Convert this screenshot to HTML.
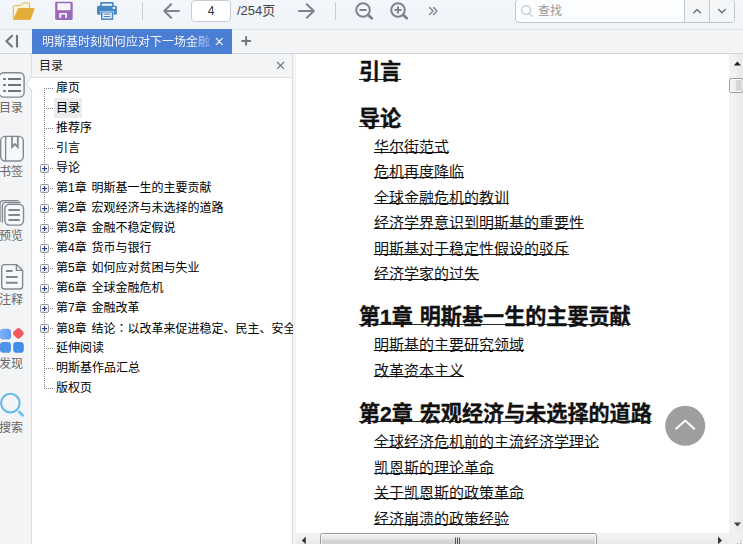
<!DOCTYPE html>
<html lang="zh-CN">
<head>
<meta charset="utf-8">
<title>明斯基时刻如何应对下一场金融危机</title>
<style>
*{box-sizing:border-box;margin:0;padding:0}
html,body{width:743px;height:544px;overflow:hidden;background:#f3f4f6}
body{position:relative;font-family:"Liberation Sans","Noto Sans CJK SC",sans-serif;color:#000}
.abs{position:absolute}
#toolbar{left:0;top:0;width:743px;height:30px;background:linear-gradient(#f3f7fb,#eff4f9);border-bottom:1px solid #e0e4e9}
#tabrow{left:0;top:30px;width:743px;height:24px;background:#f3f4f6;border-bottom:1px solid #cfd2d6}
#tab{left:32px;top:29px;width:200px;height:25px;background:#4a7dd4;color:#fff;font-size:12px;line-height:27px;padding-left:10px;white-space:nowrap;overflow:hidden}
#iconbar{left:0;top:54px;width:31px;height:490px;background:#f3f4f6}
#toc{left:31px;top:54px;width:262px;height:490px;background:#fff;border-left:1px solid #dcdfe3;border-right:1px solid #dcdfe3}
#tochead{left:0;top:0;width:260px;height:24px;background:#f3f4f6;border-bottom:1px solid #dcdfe3;font-size:12px;line-height:24px;padding-left:7px;color:#222}
#divider{left:293px;top:54px;width:3px;height:490px;background:#f3f4f6}
#main{left:296px;top:54px;width:433px;height:479px;background:#fff;overflow:hidden}
#vscroll{left:729px;top:54px;width:14px;height:479px;background:linear-gradient(90deg,#f2f2f2 0,#f1f1f1 50%,#ececec 58%,#ebebeb 100%)}
#hscroll{left:296px;top:533px;width:447px;height:11px;background:linear-gradient(#f2f2f2 0,#f1f1f1 5px,#ececec 7px,#ebebeb 100%)}
.ti{word-spacing:1.5px;position:absolute;left:22px;font-size:12px;line-height:20px;height:20px;white-space:nowrap;color:#000;padding:0 2px}
.h{text-decoration-color:#2a2a2a !important;position:absolute;left:63px;font-size:21.1px;word-spacing:1px;-webkit-text-stroke:0.35px #111;font-weight:bold;white-space:nowrap;line-height:28px;text-decoration:underline;text-decoration-thickness:1px;text-underline-offset:0px;color:#111}
.s{position:absolute;left:78px;font-size:15px;white-space:nowrap;line-height:22px;text-decoration:underline;text-decoration-thickness:1px;text-underline-offset:0px;color:#111}
.lbl{position:absolute;left:-1px;width:32px;font-size:12px;color:#666;line-height:14px;white-space:nowrap}

#pagebox{left:191px;top:0;width:40px;height:22px;border:1px solid #c9cdd3;border-radius:4px;background:#fff;font-size:12px;line-height:20px;text-align:center;color:#333}
#pagecnt{left:237px;top:1px;font-size:13px;line-height:20px;color:#444;white-space:nowrap}
#search{left:515px;top:-1px;width:220px;height:24px;border:1px solid #c3c7cd;border-radius:4px;background:#fcfdfe;overflow:hidden}
#sph{left:22px;top:0;font-size:12px;line-height:22px;color:#9a9a9a}
#sb1{left:168px;top:0;width:25px;height:24px;border-left:1px solid #c3c7cd;background:#f4f5f7}
#sb2{left:193px;top:0;width:27px;height:24px;border-left:1px solid #c3c7cd;background:#f4f5f7}

.sel{background:#ececec}
#tabtxt{display:inline-block;width:169px;overflow:hidden;white-space:nowrap;color:#f2f5fb;-webkit-mask-image:linear-gradient(90deg,#000 0,#000 150px,rgba(0,0,0,.25) 169px);mask-image:linear-gradient(90deg,#000 0,#000 150px,rgba(0,0,0,.25) 169px)}
</style>
</head>
<body>
<div id="toolbar" class="abs"></div>
<svg class="abs" style="left:0;top:0" width="743" height="29" viewBox="0 0 743 29">
<!-- folder -->
<path d="M13.3 19.5 V6.6 Q13.3 5.6 14.3 5.6 H20.6 L22.8 2.9 H28.6 Q29.6 2.9 29.6 3.9 V8" fill="#fbf3dc" stroke="#e6b446" stroke-width="1"/>
<path d="M18.4 8.6 H34.2 L30.2 19.3 H13.9 Z" fill="#e3ad38" stroke="#e3ad38" stroke-width="1" stroke-linejoin="round"/>
<!-- save -->
<path d="M55.2 3.2 Q55.2 1.8 56.6 1.8 H71.3 Q72.7 1.8 72.7 3.2 V18.5 Q72.7 19.9 71.3 19.9 H56.6 Q55.2 19.9 55.2 18.5 Z" fill="#9b67bb"/>
<rect x="57.4" y="3.2" width="13.1" height="7" fill="#f6f1fa"/>
<rect x="59.2" y="13" width="7.8" height="5" fill="#f6f1fa"/>
<rect x="61.2" y="14.6" width="4" height="3.4" fill="#9b67bb"/>
<!-- printer -->
<path d="M100.2 7 V3.3 Q100.2 2.1 101.4 2.1 H112.5 Q113.7 2.1 113.7 3.3 V7 Z" fill="#4787c4"/>
<rect x="101.8" y="3.7" width="10.3" height="3" fill="#f4f8fc"/>
<path d="M97 7.3 Q97 5.8 98.5 5.8 H115.4 Q116.9 5.8 116.9 7.3 V13.4 Q116.9 14.8 115.4 14.8 H98.5 Q97 14.8 97 13.4 Z" fill="#4787c4"/>
<rect x="112.8" y="7" width="2.2" height="2" fill="#f4f8fc"/>
<rect x="100.1" y="11" width="14" height="4" fill="#a9c8e6"/>
<rect x="101" y="11.8" width="12.2" height="8.1" fill="#4787c4"/>
<rect x="102.5" y="12.6" width="9.2" height="5.8" fill="#f4f8fc"/>
<rect x="103.7" y="13.6" width="6.6" height="1.1" fill="#4787c4"/>
<rect x="103.7" y="16" width="6.6" height="1.1" fill="#4787c4"/>
<!-- separators -->
<rect x="142" y="2" width="1" height="18" fill="#c9cdd3"/>
<rect x="335" y="2" width="1" height="18" fill="#c9cdd3"/>
<!-- arrows -->
<g fill="none" stroke="#7d848d" stroke-width="2" stroke-linecap="round" stroke-linejoin="round">
<path d="M179 11 H164.2 M171.2 4.2 L164.2 11 L171.2 17.8"/>
<path d="M299 11 H313.8 M306.8 4.2 L313.8 11 L306.8 17.8"/>
<circle cx="363" cy="10" r="6.8"/>
<path d="M360.2 10 H365.8"/><path d="M368.6 15.4 L371.8 18.2" stroke-width="2.8"/>
<circle cx="398" cy="10" r="6.8"/>
<path d="M395.2 10 H400.8 M398 7.2 V12.8"/><path d="M403.6 15.4 L406.8 18.2" stroke-width="2.8"/>
</g>
<g fill="none" stroke="#7d848d" stroke-width="1.4" stroke-linecap="round" stroke-linejoin="round">
<path d="M429.6 7.6 L433 11 L429.6 14.4 M433.6 7.6 L437 11 L433.6 14.4"/>
</g>
</svg>
<div class="abs" id="pagebox">4</div>
<div class="abs" id="pagecnt">/254页</div>
<div class="abs" id="search"><div class="abs" id="sph">查找</div><div class="abs" id="sb1"></div><div class="abs" id="sb2"></div>
<svg class="abs" style="left:0;top:0" width="220" height="24" viewBox="0 0 220 24"><g fill="none" stroke="#c3c7cc" stroke-width="1.2" stroke-linecap="round"><circle cx="10.1" cy="10.1" r="4.4"/><path d="M13.4 13.6 L16.4 16.4"/></g>
<g fill="none" stroke="#6a7079" stroke-width="1.4" stroke-linecap="round" stroke-linejoin="round"><path d="M177.8 12.8 L181.1 9.5 L184.4 12.8"/><path d="M202.7 9.5 L206 12.8 L209.3 9.5"/></g></svg>
</div>
<div id="tabrow" class="abs"></div>
<div id="tab" class="abs"><span id="tabtxt">明斯基时刻如何应对下一场金融危机</span></div>
<svg class="abs" style="left:0;top:29px" width="260" height="25" viewBox="0 0 260 25">
<g fill="none" stroke="#6f767f" stroke-width="1.8" stroke-linecap="round" stroke-linejoin="round">
<path d="M12 6.8 L6.4 12.2 L12 17.6 M17 6.8 V17.6" stroke-width="2.1"/>
<path d="M246.1 7.2 V16.6 M241.4 11.9 H250.9" stroke-width="2" stroke-linecap="butt"/>
</g>
<path d="M216.3 9.4 L222.3 15.6 M222.3 9.4 L216.3 15.6" fill="none" stroke="#f2f5fb" stroke-width="1.3" stroke-linecap="round"/>
</svg>
<div id="iconbar" class="abs">
<svg class="abs" style="left:0;top:0" width="32" height="490" viewBox="0 54 32 490">
<g fill="#f7f8fa" stroke="#828991" stroke-width="1.4" stroke-linejoin="round">
<rect x="-0.8" y="72.7" width="24.9" height="24.4" rx="4.5"/>
<rect x="0.7" y="136.4" width="22.6" height="24.6" rx="4.5"/>
<path d="M0 222 V204 Q0 200.6 3.4 200.6 H18.6" fill="none"/>
<path d="M2.4 222.6 V206 Q2.4 202.4 6 202.4 H20.8" fill="none"/>
<rect x="4.9" y="204.3" width="18.6" height="20.8" rx="4.5"/>
<path d="M1.7 267.4 Q1.7 264.6 4.5 264.6 H16.6 L22.6 270.4 V286.2 Q22.6 289 19.8 289 H4.5 Q1.7 289 1.7 286.2 Z"/>
<path d="M16.4 264.8 V270.4 H22.4" fill="none"/>
</g>
<g fill="none" stroke="#6d747d" stroke-width="2">
<path d="M3.2 79 H5.8 M8 79 H21 M3.2 85 H5.8 M8 85 H21 M3.2 91 H5.8 M8 91 H21"/>
<path d="M8.4 210 H19.8 M8.4 215 H19.8 M8.4 220 H19.8" stroke="#7f868e"/>
<path d="M6 271 H12.6 M6 277 H17.6 M6 282.8 H17.6" stroke="#7f868e"/>
</g>
<path d="M5.6 136.6 V160.8" stroke="#828991" stroke-width="1.4" fill="none"/>
<path d="M12 136.6 V147 L14.9 144 L17.8 147 V136.6" stroke="#828991" stroke-width="1.8" fill="none" stroke-linejoin="miter"/>
<!-- discover --><defs><linearGradient id="dg" x1="0" x2="1" y1="0" y2="0"><stop offset="0" stop-color="#7fb0fa"/><stop offset="1" stop-color="#6399f2"/></linearGradient></defs>
<rect x="-0.2" y="328.8" width="11.2" height="10.8" rx="3.4" fill="url(#dg)"/>
<rect x="-0.2" y="342" width="11.2" height="10.8" rx="3.4" fill="#4d94ea"/>
<rect x="13.2" y="342" width="10.6" height="10.8" rx="3.4" fill="#3f8fe6"/>
<rect x="13.9" y="328.8" width="9" height="9" rx="2.8" fill="#f3565b" transform="rotate(45 18.4 333.3)"/>
<!-- search -->
<circle cx="10.4" cy="403.1" r="9.3" fill="none" stroke="#5fb8ea" stroke-width="2"/>
<path d="M19.2 412.2 L22.6 415.2" stroke="#74c2ee" stroke-width="3" stroke-linecap="round" fill="none"/>
</svg>
<div class="lbl" style="top:47px">目录</div>
<div class="lbl" style="top:111px">书签</div>
<div class="lbl" style="top:175px">预览</div>
<div class="lbl" style="top:239px">注释</div>
<div class="lbl" style="top:303px">发现</div>
<div class="lbl" style="top:367px">搜索</div>
</div>
<div id="toc" class="abs">
  <div id="tochead" class="abs">目录</div>
<svg class="abs" style="left:0;top:0" width="260" height="490" viewBox="32 54 260 490">
<defs><linearGradient id="pg" x1="0" x2="0" y1="0" y2="1"><stop offset="0" stop-color="#fff"/><stop offset="0.55" stop-color="#f7f7f7"/><stop offset="1" stop-color="#d9dde6"/></linearGradient></defs><path d="M277.1 62 L284 68.9 M284 62 L277.1 68.9" stroke="#6f767f" stroke-width="1.2" fill="none"/>
<g stroke="#808080" stroke-width="1" stroke-dasharray="1 1" fill="none">
<path d="M44.5 88 V388"/>
<path d="M44 88.5 H53"/>
<path d="M44 108.5 H53"/>
<path d="M44 128.5 H53"/>
<path d="M44 148.5 H53"/>
<path d="M50 168.5 H53"/>
<path d="M50 188.5 H53"/>
<path d="M50 208.5 H53"/>
<path d="M50 228.5 H53"/>
<path d="M50 248.5 H53"/>
<path d="M50 268.5 H53"/>
<path d="M50 288.5 H53"/>
<path d="M50 308.5 H53"/>
<path d="M50 328.5 H53"/>
<path d="M44 348.5 H53"/>
<path d="M44 368.5 H53"/>
<path d="M44 388.5 H53"/>
</g>
<rect x="40.5" y="164.5" width="8" height="8" rx="1.2" fill="url(#pg)" stroke="#959595"/><path d="M42 168.5 H47 M44.5 166.0 V171.0" stroke="#24388f" stroke-width="1.2" fill="none"/>
<rect x="40.5" y="184.5" width="8" height="8" rx="1.2" fill="url(#pg)" stroke="#959595"/><path d="M42 188.5 H47 M44.5 186.0 V191.0" stroke="#24388f" stroke-width="1.2" fill="none"/>
<rect x="40.5" y="204.5" width="8" height="8" rx="1.2" fill="url(#pg)" stroke="#959595"/><path d="M42 208.5 H47 M44.5 206.0 V211.0" stroke="#24388f" stroke-width="1.2" fill="none"/>
<rect x="40.5" y="224.5" width="8" height="8" rx="1.2" fill="url(#pg)" stroke="#959595"/><path d="M42 228.5 H47 M44.5 226.0 V231.0" stroke="#24388f" stroke-width="1.2" fill="none"/>
<rect x="40.5" y="244.5" width="8" height="8" rx="1.2" fill="url(#pg)" stroke="#959595"/><path d="M42 248.5 H47 M44.5 246.0 V251.0" stroke="#24388f" stroke-width="1.2" fill="none"/>
<rect x="40.5" y="264.5" width="8" height="8" rx="1.2" fill="url(#pg)" stroke="#959595"/><path d="M42 268.5 H47 M44.5 266.0 V271.0" stroke="#24388f" stroke-width="1.2" fill="none"/>
<rect x="40.5" y="284.5" width="8" height="8" rx="1.2" fill="url(#pg)" stroke="#959595"/><path d="M42 288.5 H47 M44.5 286.0 V291.0" stroke="#24388f" stroke-width="1.2" fill="none"/>
<rect x="40.5" y="304.5" width="8" height="8" rx="1.2" fill="url(#pg)" stroke="#959595"/><path d="M42 308.5 H47 M44.5 306.0 V311.0" stroke="#24388f" stroke-width="1.2" fill="none"/>
<rect x="40.5" y="324.5" width="8" height="8" rx="1.2" fill="url(#pg)" stroke="#959595"/><path d="M42 328.5 H47 M44.5 326.0 V331.0" stroke="#24388f" stroke-width="1.2" fill="none"/>
</svg>
<div class="ti" style="top:24px">扉页</div>
<div class="ti sel" style="top:44px">目录</div>
<div class="ti" style="top:64px">推荐序</div>
<div class="ti" style="top:84px">引言</div>
<div class="ti" style="top:104px">导论</div>
<div class="ti" style="top:124px">第1章 明斯基一生的主要贡献</div>
<div class="ti" style="top:144px">第2章 宏观经济与未选择的道路</div>
<div class="ti" style="top:164px">第3章 金融不稳定假说</div>
<div class="ti" style="top:184px">第4章 货币与银行</div>
<div class="ti" style="top:204px">第5章 如何应对贫困与失业</div>
<div class="ti" style="top:224px">第6章 全球金融危机</div>
<div class="ti" style="top:244px">第7章 金融改革</div>
<div class="ti" style="top:264px">第8章 结论<span lang="ja" style="font-family:'Noto Sans CJK JP',sans-serif">：</span>以改革来促进稳定、民主、安全和平等</div>
<div class="ti" style="top:284px">延伸阅读</div>
<div class="ti" style="top:304px">明斯基作品汇总</div>
<div class="ti" style="top:324px">版权页</div>
</div>
<svg class="abs" style="left:24px;top:74px" width="10" height="20" viewBox="24 74 10 20"><path d="M32.2 77.2 L25.7 83.8 L32.2 90.4 Z" fill="#fff"/><path d="M31.5 77.4 L25.7 83.8 L31.5 90.2" fill="none" stroke="#d3d6da" stroke-width="1"/></svg>
<div id="divider" class="abs"></div>
<div id="main" class="abs">
<div class="h" style="top:4px">引言</div>
<div class="h" style="top:51px">导论</div>
<div class="h" style="top:249px">第1章 明斯基一生的主要贡献</div>
<div class="h" style="top:346px">第2章 宏观经济与未选择的道路</div>
<div class="s" style="top:82px">华尔街范式</div>
<div class="s" style="top:107px">危机再度降临</div>
<div class="s" style="top:133px">全球金融危机的教训</div>
<div class="s" style="top:158px">经济学界意识到明斯基的重要性</div>
<div class="s" style="top:184px">明斯基对于稳定性假设的驳斥</div>
<div class="s" style="top:209px">经济学家的过失</div>
<div class="s" style="top:280px">明斯基的主要研究领域</div>
<div class="s" style="top:306px">改革资本主义</div>
<div class="s" style="top:377px">全球经济危机前的主流经济学理论</div>
<div class="s" style="top:403px">凯恩斯的理论革命</div>
<div class="s" style="top:428px">关于凯恩斯的政策革命</div>
<div class="s" style="top:454px">经济崩溃的政策经验</div>
</div>
<div id="vscroll" class="abs">
<svg class="abs" style="left:0;top:0" width="14" height="479" viewBox="729 54 14 479">
<path d="M733.8 65.4 L737.4 61.4 L741 65.4 Z" fill="#222"/>
<path d="M733.8 522.4 L737.4 526.4 L741 522.4 Z" fill="#444"/>
<defs><linearGradient id="vg" x1="0" x2="1" y1="0" y2="0"><stop offset="0" stop-color="#f6f6f6"/><stop offset="0.45" stop-color="#ececec"/><stop offset="0.5" stop-color="#d8d8d8"/><stop offset="1" stop-color="#cfcfcf"/></linearGradient>
</defs>
<rect x="729.5" y="78.5" width="13.6" height="14" rx="2" fill="url(#vg)" stroke="#9a9a9a"/><rect x="730.5" y="79.5" width="11.6" height="12" rx="1" fill="none" stroke="#fafafa"/>
</svg></div>
<div id="hscroll" class="abs">
<svg class="abs" style="left:0;top:0" width="447" height="11" viewBox="296 533 447 11">
<defs><linearGradient id="hg" x1="0" x2="0" y1="0" y2="1"><stop offset="0" stop-color="#f4f4f4"/><stop offset="0.4" stop-color="#e6e6e6"/><stop offset="0.5" stop-color="#d6d6d6"/><stop offset="1" stop-color="#cdcdcd"/></linearGradient></defs>
<path d="M305.8 536.6 L301.8 540.4 L305.8 544.2 Z" fill="#333"/>
<path d="M718 536.6 L722 540.4 L718 544.2 Z" fill="#333"/>
<rect x="320.5" y="533.5" width="276" height="14" rx="2" fill="url(#hg)" stroke="#9a9a9a"/><rect x="321.5" y="534.5" width="274" height="12" rx="1" fill="none" stroke="#fafafa"/>
<path d="M455.5 537.5 V545 M457.5 537.5 V545 M459.5 537.5 V545" stroke="#555" stroke-width="1" fill="none"/>
<rect x="729" y="533" width="14" height="11" fill="#f0f0f0"/>
<rect x="740" y="540" width="1.4" height="1.4" fill="#b5b5b5"/>
<rect x="737" y="543" width="1.4" height="1.4" fill="#b5b5b5"/>
<rect x="740" y="543" width="1.4" height="1.4" fill="#b5b5b5"/>
</svg></div>
<svg class="abs" style="left:664px;top:405px" width="42" height="42" viewBox="664 405 42 42"><circle cx="685.2" cy="425.8" r="20" fill="#9e9e9e"/><path d="M675.6 429.2 L685.2 420.6 L694.8 429.2" fill="none" stroke="#fff" stroke-width="2"/></svg>
</body>
</html>
